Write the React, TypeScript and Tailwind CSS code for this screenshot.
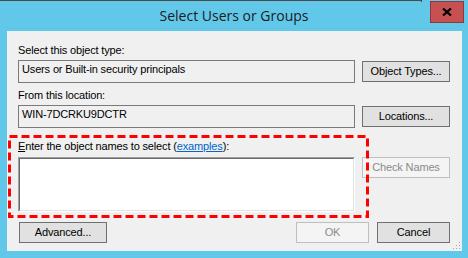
import React from "react";

const Button = ({
  label,
  width,
  disabled = false,
  className = "",
}: {
  label: string;
  width: string;
  disabled?: boolean;
  className?: string;
}) => (
  <div
    className={`${width} h-[21px] flex items-center justify-center border ${
      disabled
        ? "border-[#bfbfbf] bg-[#f4f4f4] text-[#8a8a8a]"
        : "border-[#707070] bg-[#e1e1e1] text-black"
    } ${className}`}
  >
    {label}
  </div>
);

const ReadOnlyBox = ({ value }: { value: string }) => (
  <div className="h-[23px] border border-[#7a7a7a] bg-[#f0f0f0] pl-[3px] pt-[2px] leading-[13px]">
    {value}
  </div>
);

const App = () => {
  return (
    <div className="relative w-[468px] h-[258px] overflow-hidden bg-[#62c8ea] font-['Liberation_Sans',Arial,sans-serif] text-[11px] tracking-[-0.15px] text-black">
      {/* window chrome */}
      <div className="absolute left-0 top-0 h-px w-[422px] bg-[#4a4a4a]" />
      <div className="absolute left-[421px] top-0 h-[2px] w-px bg-[#4a4a4a]" />
      <div className="absolute left-[430px] top-[1px] flex h-[22px] w-[34px] items-center justify-center border border-[#8a3a3a] bg-[#c75050]">
        <svg width="10" height="8" viewBox="0 0 10 8">
          <path d="M1 0.5 L9 7.5 M9 0.5 L1 7.5" stroke="#000" strokeWidth="2.2" />
        </svg>
      </div>

      <div className="flex h-[31px] items-center justify-center pb-[1px] font-['Open_Sans',sans-serif] text-[14px] tracking-normal text-[#1b1b1b]">
        Select Users or Groups
      </div>

      <div className="relative ml-[7px] h-[220px] w-[455px] bg-[#f0f0f0] pl-[11px] pr-[12px]">
        <div className="pt-[13px] leading-[13px]">Select this object type:</div>
        <div className="mt-[3px] grid grid-cols-[337px_88px] gap-[7px]">
          <ReadOnlyBox value="Users or Built-in security principals" />
          <Button label="Object Types..." width="w-[88px]" className="mt-[1px]" />
        </div>

        <div className="mt-[6px] leading-[13px]">From this location:</div>
        <div className="mt-[3px] grid grid-cols-[337px_88px] gap-[7px]">
          <ReadOnlyBox value="WIN-7DCRKU9DCTR" />
          <Button label="Locations..." width="w-[88px]" className="mt-[1px]" />
        </div>

        <div className="mt-[12px] leading-[13px]">
          <span className="underline">E</span>nter the object names to select (
          <span className="text-[#0066cc] underline">examples</span>):
        </div>
        <div className="mt-[4px] grid grid-cols-[337px_88px] gap-[7px]">
          <div className="h-[55px] border-t border-l border-[#a0a0a0] border-b-white border-r-white border-b border-r">
            <div className="h-full border-t border-l border-[#696969] border-b border-r border-b-[#e3e3e3] border-r-[#e3e3e3] bg-white" />
          </div>
          <Button label="Check Names" width="w-[88px]" disabled />
        </div>

        <div className="mt-[10px] flex">
          <Button label="Advanced..." width="w-[88px]" className="ml-[1px]" />
          <div className="ml-auto flex gap-[8px]">
            <Button label="OK" width="w-[73px]" disabled />
            <Button label="Cancel" width="w-[73px]" />
          </div>
        </div>

        {/* red dashed highlight */}
        <svg
          className="absolute left-[1px] top-[104px]"
          width="361"
          height="83"
          viewBox="0 0 361 83"
        >
          <rect
            x="1.5"
            y="1.5"
            width="358"
            height="80"
            fill="none"
            stroke="#ff0000"
            strokeWidth="3"
            strokeDasharray="8 4"
          />
        </svg>

        {/* resize grip */}
        <svg className="absolute right-[2px] bottom-[2px]" width="7" height="7" viewBox="0 0 7 7">
          <g fill="#a8a8a8">
            <rect x="6" y="0" width="1" height="1" />
            <rect x="3" y="3" width="1" height="1" />
            <rect x="6" y="3" width="1" height="1" />
            <rect x="0" y="6" width="1" height="1" />
            <rect x="3" y="6" width="1" height="1" />
            <rect x="6" y="6" width="1" height="1" />
          </g>
        </svg>
      </div>
    </div>
  );
};

export default App;
